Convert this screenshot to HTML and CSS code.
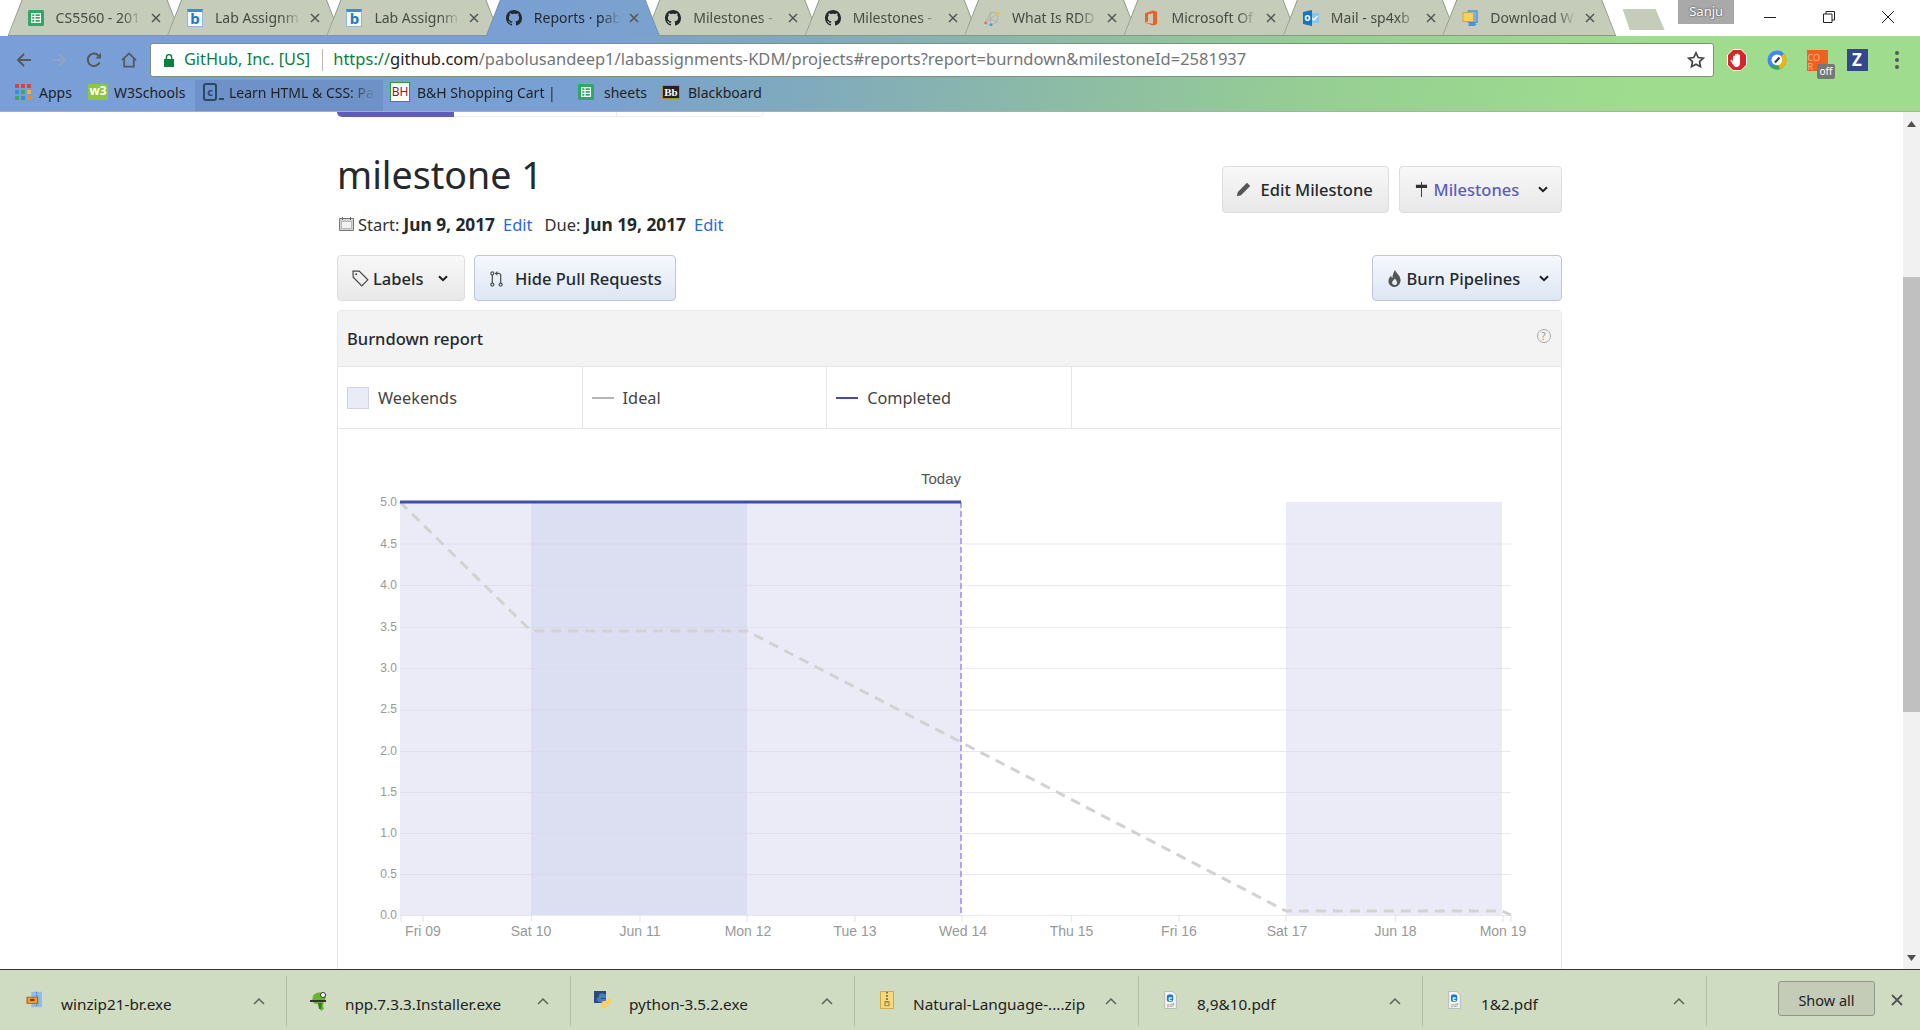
FILE: index.html
```html
<!DOCTYPE html>
<html lang="en">
  <head>
    <meta charset="UTF-8" />
    <meta name="viewport" content="width=device-width, initial-scale=1.0" />
    <title>Reports</title>
    <link rel="stylesheet" href="styles.css">
  </head>
  <body>
    <svg class="defs" width="0" height="0">
      <symbol id="i-github" viewBox="0 0 16 16"><path fill="#24292e" d="M8 0C3.58 0 0 3.58 0 8c0 3.54 2.29 6.53 5.47 7.59.4.07.55-.17.55-.38 0-.19-.01-.82-.01-1.49-2.01.37-2.53-.49-2.69-.94-.09-.23-.48-.94-.82-1.13-.28-.15-.68-.52-.01-.53.63-.01 1.08.58 1.23.82.72 1.21 1.87.87 2.33.66.07-.52.28-.87.51-1.07-1.78-.2-3.64-.89-3.64-3.95 0-.87.31-1.59.82-2.15-.08-.2-.36-1.02.08-2.12 0 0 .67-.21 2.2.82.64-.18 1.32-.27 2-.27.68 0 1.36.09 2 .27 1.53-1.04 2.2-.82 2.2-.82.44 1.1.16 1.92.08 2.12.51.56.82 1.27.82 2.15 0 3.07-1.87 3.75-3.65 3.95.29.25.54.73.54 1.48 0 1.07-.01 1.93-.01 2.2 0 .21.15.46.55.38A8.013 8.013 0 0016 8c0-4.42-3.58-8-8-8z"/></symbol>
      <symbol id="i-sheets" viewBox="0 0 16 16"><rect width="16" height="16" rx="1.5" fill="#2fa866"/><path fill="none" stroke="#fff" stroke-width="1.2" d="M3.6 3.6h8.8v8.8H3.6zM3.6 6.5h8.8M3.6 9.4h8.8M7 3.6v8.8"/></symbol>
      <symbol id="i-close" viewBox="0 0 10 10"><path fill="none" stroke="#555" stroke-width="1.5" d="M1 1l8 8M9 1l-8 8"/></symbol>
      <symbol id="i-caret" viewBox="0 0 12 8"><path fill="none" stroke="#5c6358" stroke-width="1.5" d="M1 7l5-5 5 5"/></symbol>
      <symbol id="i-chev" viewBox="0 0 10 7"><path fill="none" stroke="#1b1f23" stroke-width="2" d="M1 1.2l4 4 4-4"/></symbol>
    </svg>

    <div class="tabstrip">
      <div class="tab">
        <svg class="favicon"><use href="#i-sheets"/></svg>
        <span class="tab-title">CS5560 - 201</span>
        <svg class="tab-close"><use href="#i-close"/></svg>
      </div>
      <div class="tab">
        <span class="favicon fav-b">b</span>
        <span class="tab-title">Lab Assignm</span>
        <svg class="tab-close"><use href="#i-close"/></svg>
      </div>
      <div class="tab">
        <span class="favicon fav-b">b</span>
        <span class="tab-title">Lab Assignm</span>
        <svg class="tab-close"><use href="#i-close"/></svg>
      </div>
      <div class="tab tab-active">
        <svg class="favicon"><use href="#i-github"/></svg>
        <span class="tab-title">Reports · pab</span>
        <svg class="tab-close"><use href="#i-close"/></svg>
      </div>
      <div class="tab">
        <svg class="favicon"><use href="#i-github"/></svg>
        <span class="tab-title">Milestones -</span>
        <svg class="tab-close"><use href="#i-close"/></svg>
      </div>
      <div class="tab">
        <svg class="favicon"><use href="#i-github"/></svg>
        <span class="tab-title">Milestones -</span>
        <svg class="tab-close"><use href="#i-close"/></svg>
      </div>
      <div class="tab">
        <svg class="favicon" viewBox="0 0 16 16">
          <path fill="none" stroke="#a8a8a8" stroke-width=".7" d="M1 13L7 2l7 1-1 9-6 3zM7 2l-1 7 7 3M1 13l5-4 8-6M6 9l1 6"/>
          <circle cx="14" cy="3" r="1.6" fill="#f2c037"/><circle cx="7" cy="15" r="1.4" fill="#3fa0e8"/><circle cx="1.5" cy="13" r="1.2" fill="#e0664a"/>
        </svg>
        <span class="tab-title">What Is RDD</span>
        <svg class="tab-close"><use href="#i-close"/></svg>
      </div>
      <div class="tab">
        <svg class="favicon" viewBox="0 0 16 16"><path fill="#e8622a" d="M2 3.2L10 .5l4 1.2v12.6L10 15.5l-8-2.7 8 1V3.3L5 4.4v7.2l-3 1.2z"/></svg>
        <span class="tab-title">Microsoft Of</span>
        <svg class="tab-close"><use href="#i-close"/></svg>
      </div>
      <div class="tab">
        <svg class="favicon" viewBox="0 0 16 16">
          <rect x="7" y="3" width="9" height="10" fill="#8cc4ee"/><path fill="none" stroke="#fff" stroke-width="1.3" d="M9 8l2 2 3.5-4"/>
          <path fill="#1474c8" d="M0 2l9-2v16l-9-2z"/><text x="4.4" y="11" class="fav-o">o</text>
        </svg>
        <span class="tab-title">Mail - sp4xb</span>
        <svg class="tab-close"><use href="#i-close"/></svg>
      </div>
      <div class="tab">
        <svg class="favicon" viewBox="0 0 18 18">
          <rect x="7" y="1" width="10" height="13" fill="#7eb4e6" stroke="#3c82c8"/><rect x="1" y="3" width="12" height="10" fill="#f3d35e" stroke="#c9a634"/><path fill="#4a94d8" d="M8 14h7v2l2 0-3 2H7z"/>
        </svg>
        <span class="tab-title">Download W</span>
        <svg class="tab-close"><use href="#i-close"/></svg>
      </div>
      <div class="newtab"></div>
      <div class="profile">Sanju</div>
      <div class="winbtns">
        <svg width="12" height="12" viewBox="0 0 12 12"><path stroke="#222" d="M0 6.5h12"/></svg>
        <svg width="12" height="12" viewBox="0 0 12 12"><path fill="none" stroke="#222" d="M.5 3h8.5v8.5H.5zM3 3V.5h8.5V9H9"/></svg>
        <svg width="12" height="12" viewBox="0 0 12 12"><path stroke="#222" d="M0 0l12 12M12 0L0 12"/></svg>
      </div>
    </div>

    <div class="framebar">
      <div class="toolbar">
        <div class="navbtn">
          <svg width="16" height="16" viewBox="0 0 16 16"><path fill="none" stroke="#55585c" stroke-width="2" d="M15 8H2M8 2L2 8l6 6"/></svg>
        </div>
        <div class="navbtn">
          <svg width="16" height="16" viewBox="0 0 16 16"><path fill="none" stroke="#8fa4c4" stroke-width="2" d="M1 8h13M8 2l6 6-6 6"/></svg>
        </div>
        <div class="navbtn">
          <svg width="16" height="16" viewBox="0 0 16 16"><path fill="none" stroke="#55585c" stroke-width="2" d="M13.6 10.5A6.2 6.2 0 1 1 12.6 3.6L14 5"/><path fill="#55585c" d="M15 .8V6.4H9.4z"/></svg>
        </div>
        <div class="navbtn">
          <svg width="16" height="16" viewBox="0 0 16 16"><path fill="none" stroke="#55585c" stroke-width="1.8" d="M1 8.2L8 1.4l7 6.8M3.2 7v7.6h9.6V7"/></svg>
        </div>
        <div class="omnibox">
          <svg class="lock" width="10" height="13" viewBox="0 0 10 13"><path fill="#0b8043" d="M0 5h10v8H0z"/><path fill="none" stroke="#0b8043" stroke-width="1.5" d="M2.4 5V3.2a2.6 2.6 0 0 1 5.2 0V5"/></svg>
          <span class="ev-name">GitHub, Inc. [US]</span>
          <span class="ev-sep"></span>
          <span class="url"><span class="url-scheme">https://</span><span class="url-host">github.com</span>/pabolusandeep1/labassignments-KDM/projects#reports?report=burndown&amp;milestoneId=2581937</span>
          <svg class="star" width="18" height="18" viewBox="0 0 18 18"><path fill="none" stroke="#444" stroke-width="1.7" d="M9 1.8l2.2 4.7 5.1.6-3.8 3.5 1 5.1L9 13.2l-4.5 2.5 1-5.1-3.8-3.5 5.1-.6z"/></svg>
        </div>
        <div class="ext">
          <svg width="20" height="24" viewBox="0 0 20 24"><path fill="#d8252b" stroke="#fff" d="M6 1.5h8L19.5 7v10L14 22.500H6L.5 17V7z"/><path fill="#fff" d="M6 14V8.200a1 1 0 0 1 1.800 0V6.500a1 1 0 0 1 1.800 0v-.4a1 1 0 0 1 1.800 0v1a1 1 0 0 1 1.600 0V15c0 2.500-1.500 4-3.400 4-2 0-3-1-4-3l-2-3c-.6-1 .9-1.800 1.500-1z"/></svg>
        </div>
        <div class="ext">
          <svg width="20" height="24" viewBox="0 0 20 24"><circle cx="10" cy="12" r="7.500" fill="#fff" stroke="#4285f4" stroke-width="4"/><path fill="none" stroke="#f4b400" stroke-width="4" d="M15.500 6.900A7.500 7.500 0 0 1 12 19.200"/><path fill="none" stroke="#34a853" stroke-width="4" d="M12 19.200A7.500 7.500 0 0 1 5 17.600"/><path stroke="#333" stroke-width="2" d="M8 14.500l4.500-5"/></svg>
        </div>
        <div class="ext ext-cors">
          <span class="cors-box">CO<br>R</span>
          <span class="cors-off">off</span>
        </div>
        <div class="ext"><span class="ext-z">Z</span></div>
        <div class="ext ext-menu"><i></i><i></i><i></i></div>
      </div>
      <div class="bookmarks">
        <div class="bm bm-apps">
          <svg width="16" height="16" viewBox="0 0 16 16">
            <path fill="#d9453c" d="M0 0h4v4H0zM6 0h4v4H6z"/><path fill="#d9453c" d="M12 0h4v4h-4z"/>
            <path fill="#2f8fdc" d="M0 6h4v4H0z"/><path fill="#3bab5a" d="M6 6h4v4H6z"/><path fill="#f0b429" d="M12 6h4v4h-4z"/>
            <path fill="#3bab5a" d="M0 12h4v4H0z"/><path fill="#2f8fdc" d="M6 12h4v4H6z"/><path fill="#f08a29" d="M12 12h4v4h-4z"/>
          </svg>
          Apps
        </div>
        <div class="bm bm-w3"><span class="ic-w3">w3</span>W3Schools</div>
        <div class="bm bm-learn"><span class="ic-c">c</span><span class="ic-under"></span><span class="bm-fade">Learn HTML &amp; CSS: Pa</span></div>
        <div class="bm bm-bh"><span class="ic-bh">BH</span><span class="bm-fade2">B&amp;H Shopping Cart |</span></div>
        <div class="bm bm-sheets"><svg width="16" height="16"><use href="#i-sheets"/></svg>sheets</div>
        <div class="bm bm-bb"><span class="ic-bb">Bb</span>Blackboard</div>
      </div>
    </div>

    <div class="viewport">
      <div class="page">
        <div class="subnav">
          <span class="subnav-on"></span>
          <span class="subnav-a"></span>
          <span class="subnav-b"></span>
        </div>

        <div class="title-row">
          <div>
            <h1>milestone 1</h1>
            <div class="dates">
              <svg width="15" height="14" viewBox="0 0 15 14"><path fill="#d4d4d4" stroke="#777" d="M.5 1.500h14v12H.5z"/><path fill="#f2f2f2" stroke="#999" stroke-width=".6" d="M2.500 4.500h10v7h-10z"/><path stroke="#666" d="M3.500 0v3M11.500 0v3"/></svg>
              <span class="start">Start:</span><b>Jun 9, 2017</b>
              <a class="edit">Edit</a>
              <span class="due">Due:</span><b>Jun 19, 2017</b>
              <a class="edit">Edit</a>
            </div>
          </div>
          <div class="title-btns">
            <button class="btn btn-edit">
              <svg width="15" height="15" viewBox="0 0 15 15"><path fill="#555" d="M11 .8l3.200 3.200L5 13.200 .8 14.200 1.800 10z"/></svg>
              Edit Milestone
            </button>
            <button class="btn btn-miles">
              <svg width="13" height="15" viewBox="0 0 14 16"><path fill="#333" d="M6.500 0h1v3H13v3.500H1V3h5.500zM6.500 6.500h1V16h-1z"/></svg>
              <span class="purple">Milestones</span>
              <svg class="chev"><use href="#i-chev"/></svg>
            </button>
          </div>
        </div>

        <div class="action-row">
          <div class="action-left">
            <button class="btn btn-labels">
              <svg width="17" height="17" viewBox="0 0 17 17"><path fill="none" stroke="#444" stroke-width="1.200" d="M1 1.200h6.200l8.600 8.600-6 6L1.200 7.200z"/><circle cx="4.200" cy="4.200" r="1" fill="#444"/></svg>
              Labels
              <svg class="chev"><use href="#i-chev"/></svg>
            </button>
            <button class="btn btn-blue btn-pr">
              <svg width="13" height="16" viewBox="0 0 14 17"><g fill="none" stroke="#555" stroke-width="1.400"><circle cx="2.500" cy="2.500" r="1.600"/><circle cx="2.500" cy="14.500" r="1.600"/><circle cx="11.500" cy="14.500" r="1.600"/><path d="M2.500 4.100v8.800M11.500 12.900V4.500c0-1.500-1-2-2.500-2H7"/></g><path fill="#555" d="M8 0v5L5 2.500z"/></svg>
              Hide Pull Requests
            </button>
          </div>
          <button class="btn btn-blue btn-burn">
            <svg width="13" height="17" viewBox="0 0 13 17"><path fill="#555" d="M7 0c1 3 5 5 5.500 9.500C13 14 9.500 17 6.500 17S0 14.500.5 10.500C.7 8.500 2 7 3 5.500c.3 1.500.7 2 1.500 2.500C4.500 5 5.500 2.500 7 0zM6.500 15c1.500 0 2.600-1 2.600-2.600 0-1.500-1.400-2.400-2.200-4-1 1.400-2.800 2.500-2.800 4.200C4.100 14 5.200 15 6.500 15z"/></svg>
            Burn Pipelines
            <svg class="chev"><use href="#i-chev"/></svg>
          </button>
        </div>

        <div class="panel">
          <div class="panel-head">
            <span class="panel-title">Burndown report</span>
            <span class="help">?</span>
          </div>
          <div class="legend">
            <div class="legend-cell"><span class="swatch"></span>Weekends</div>
            <div class="legend-cell"><span class="dash dash-ideal"></span>Ideal</div>
            <div class="legend-cell"><span class="dash dash-done"></span>Completed</div>
          </div>
          <svg class="chart" width="1222" height="540" viewBox="338 429 1222 540">
            <rect x="400" y="502" width="561" height="413" fill="#eaebf7"/>
            <rect x="531" y="502" width="216" height="413" fill="#dcdff1"/>
            <rect x="1286" y="502" width="216" height="413" fill="#eaebf7"/>

            <g class="grid">
              <path d="M400 544H1511M400 585.500H1511M400 627.500H1511M400 668.500H1511M400 710H1511M400 751.500H1511M400 792.500H1511M400 833.500H1511M400 874.500H1511M400 915.500H1511"/>
              <path d="M401 915v7M423 915v7M531.500 915v7M640 915v7M747 915v7M855 915v7M962 915v7M1071.500 915v7M1179 915v7M1286 915v7M1395.500 915v7M1503 915v7M1511 915v7"/>
            </g>

            <path class="ideal" d="M400 502L531 631H747L1286 911H1502L1511 915"/>
            <path class="today" d="M961 502V915"/>
            <path class="done" d="M400 502H961"/>

            <text x="961" y="483.500" class="today-label">Today</text>

            <g class="ylabels">
              <text x="397" y="506">5.0</text>
              <text x="397" y="548">4.5</text>
              <text x="397" y="589">4.0</text>
              <text x="397" y="631">3.5</text>
              <text x="397" y="672">3.0</text>
              <text x="397" y="713">2.5</text>
              <text x="397" y="755">2.0</text>
              <text x="397" y="796">1.5</text>
              <text x="397" y="837">1.0</text>
              <text x="397" y="878">0.5</text>
              <text x="397" y="919">0.0</text>
            </g>
            <g class="xlabels">
              <text x="423" y="936">Fri 09</text>
              <text x="531" y="936">Sat 10</text>
              <text x="640" y="936">Jun 11</text>
              <text x="748" y="936">Mon 12</text>
              <text x="855" y="936">Tue 13</text>
              <text x="963" y="936">Wed 14</text>
              <text x="1071.500" y="936">Thu 15</text>
              <text x="1179" y="936">Fri 16</text>
              <text x="1287" y="936">Sat 17</text>
              <text x="1395.500" y="936">Jun 18</text>
              <text x="1503" y="936">Mon 19</text>
            </g>
          </svg>
        </div>
      </div>

      <div class="scrollbar">
        <svg class="arrow" width="9" height="6" viewBox="0 0 9 6"><path fill="#505050" d="M4.500 0L9 6H0z"/></svg>
        <div class="thumb"></div>
        <svg class="arrow" width="9" height="6" viewBox="0 0 9 6"><path fill="#505050" d="M0 0h9L4.500 6z"/></svg>
      </div>
    </div>

    <div class="downloads">
      <div class="dl">
        <svg class="dl-icon" width="17" height="17" viewBox="0 0 16 22" preserveAspectRatio="none"><path fill="#8fbce8" d="M5 1h10v20H5z"/><path stroke="#3a78c0" stroke-dasharray="2 2" d="M10 1v20"/><path fill="#e8a030" stroke="#a05a18" d="M1 8h10v8H1z"/><path fill="#a02c20" d="M4 10h4v3H4z"/></svg>
        <span class="dl-name">winzip21-br.exe</span>
        <svg class="dl-caret"><use href="#i-caret"/></svg>
      </div>
      <div class="dl">
        <svg class="dl-icon" width="20" height="20" viewBox="0 0 20 20"><path fill="#6bb52d" d="M3 5c1-3 8-5 12-2 2 2 1 5-1 7l-1 5 1 3-3 2-2-4-1-3H5L2 10z"/><circle cx="13" cy="4" r="2.500" fill="#fff" stroke="#333"/><path stroke="#333" stroke-width="2" d="M0 10h16"/><path fill="#2f7d22" d="M8 12h4l-1 6H9z"/></svg>
        <span class="dl-name">npp.7.3.3.Installer.exe</span>
        <svg class="dl-caret"><use href="#i-caret"/></svg>
      </div>
      <div class="dl">
        <svg class="dl-icon" width="18" height="18" viewBox="0 0 18 18"><path fill="#2c4a7c" d="M0 0h12v12H0z"/><path fill="#4a7cc0" d="M5 4c0-2 6-2 7 0v3H7v1h5v3H6c-2 0-3-1-3-3 0-2 2-2 2-2z"/><path fill="#ffd342" d="M14 7c2 0 3 1 3 3 0 3-2 3-3 3H9v1h5v1c0 3-6 3-7 1v-3c0-2 2-3 3-3h4z"/></svg>
        <span class="dl-name">python-3.5.2.exe</span>
        <svg class="dl-caret"><use href="#i-caret"/></svg>
      </div>
      <div class="dl">
        <svg class="dl-icon dl-icon-doc" width="14" height="18" viewBox="0 0 14 22" preserveAspectRatio="none"><path fill="#f6d97a" stroke="#c9a634" d="M.5.500h13v21H.5z"/><path stroke="#8a7440" stroke-width="2" stroke-dasharray="2 2" d="M7 1v13"/><rect x="5" y="13" width="4" height="5" fill="none" stroke="#8a7440"/></svg>
        <span class="dl-name">Natural-Language-....zip</span>
        <svg class="dl-caret"><use href="#i-caret"/></svg>
      </div>
      <div class="dl">
        <svg class="dl-icon dl-icon-doc" width="13" height="18" viewBox="0 0 14 20"><path fill="#f4f4f4" stroke="#b5b5b5" d="M.5.5h9l4 4v15H.5z"/><rect x="3" y="4" width="7" height="8" rx="2" fill="#1976d2"/><text x="6.500" y="10.600" class="pdf-e">e</text><text x="7" y="17.500" class="pdf-t">pdf</text></svg>
        <span class="dl-name">8,9&amp;10.pdf</span>
        <svg class="dl-caret"><use href="#i-caret"/></svg>
      </div>
      <div class="dl">
        <svg class="dl-icon dl-icon-doc" width="13" height="18" viewBox="0 0 14 20"><path fill="#f4f4f4" stroke="#b5b5b5" d="M.5.5h9l4 4v15H.5z"/><rect x="3" y="4" width="7" height="8" rx="2" fill="#1976d2"/><text x="6.500" y="10.600" class="pdf-e">e</text><text x="7" y="17.500" class="pdf-t">pdf</text></svg>
        <span class="dl-name">1&amp;2.pdf</span>
        <svg class="dl-caret"><use href="#i-caret"/></svg>
      </div>
      <button class="showall">Show all</button>
      <svg class="dl-close" width="12" height="12" viewBox="0 0 12 12"><path fill="none" stroke="#555" stroke-width="1.800" d="M1 1l10 10M11 1L1 11"/></svg>
    </div>
  </body>
</html>
```

FILE: styles.css
```css
* {
  box-sizing: border-box;
}
html,
body {
  margin: 0;
  height: 100%;
}
body {
  display: flex;
  flex-direction: column;
  height: 1030px;
  overflow: hidden;
  background-color: #ffffff;
  color: #24292e;
  font-family: 'Noto Sans', 'Open Sans', sans-serif;
}
.defs {
  position: absolute;
}

/* tab strip */
.tabstrip {
  display: flex;
  flex: none;
  height: 36px;
  padding-left: 7.6px;
  background-color: #ffffff;
}
.tab {
  position: relative;
  display: flex;
  flex: none;
  align-items: center;
  width: 174px;
  height: 36px;
  margin-right: -14.6px;
  padding: 0 0 1px 20px;
  background-color: #8d9585;
  clip-path: polygon(14px 0, 160px 0, 174px 100%, 0 100%);
  font-size: 14px;
  color: #484c44;
}
.tab::before {
  content: '';
  position: absolute;
  top: 0;
  left: 1px;
  width: 172px;
  height: 35px;
  background-color: #c5ccb9;
  clip-path: polygon(14px 0, 158px 0, 172px 100%, 0 100%);
}
.tab > * {
  position: relative;
}
.tab-active {
  color: #24292e;
  background-color: #6f8fb8;
  z-index: 1;
}
.tab-active::before {
  height: 36px;
  background: linear-gradient(90deg, #7a9fd3, #7aa2ce);
}
.favicon {
  flex: none;
  width: 16px;
  height: 16px;
  margin-right: 12px;
}
.fav-b {
  display: block;
  height: 18px;
  border: 1px solid #8db9df;
  border-top-width: 3px;
  border-top-color: #3f8ccb;
  background-color: #f4f8fc;
  color: #1f7ac4;
  font-size: 15px;
  font-weight: 700;
  line-height: 13px;
  text-align: center;
}
.fav-o {
  fill: #ffffff;
  font-size: 10px;
  font-weight: 700;
  text-anchor: middle;
}
.tab-title {
  flex: none;
  width: 86px;
  overflow: hidden;
  white-space: nowrap;
  -webkit-mask-image: linear-gradient(90deg, #000 78%, transparent 100%);
  mask-image: linear-gradient(90deg, #000 78%, transparent 100%);
}
.tab-close {
  flex: none;
  width: 10px;
  height: 10px;
  margin-left: 9px;
}
.newtab {
  flex: none;
  width: 42px;
  height: 21px;
  margin: 9px 0 0 21px;
  background-color: #c5ccb9;
  clip-path: polygon(0 0, 33px 0, 100% 100%, 7px 100%);
}
.profile {
  flex: none;
  width: 56px;
  height: 24px;
  margin-left: 13.500px;
  background-color: #a9a9a9;
  color: #ffffff;
  font-size: 13px;
  line-height: 23px;
  text-align: center;
  text-shadow: 0 0 2px #222222;
}
.winbtns {
  display: flex;
  flex: none;
  gap: 47px;
  height: 12px;
  margin: 11px 0 0 30px;
}

/* toolbar + bookmarks share the theme gradient */
.framebar {
  flex: none;
  height: 76px;
  border-bottom: 1px solid #a8b0a8;
  background: linear-gradient(95deg, #7a9fd8 0%, #79a0d2 30%, #80aabd 42%, #8cbba6 55%, #97d092 70%, #9fdc8e 85%);
}
.toolbar {
  display: flex;
  align-items: flex-start;
  height: 39px;
  padding: 7px 0 0 6px;
}
.navbtn {
  display: flex;
  flex: none;
  align-items: center;
  justify-content: center;
  width: 35px;
  height: 34px;
}
.omnibox {
  display: flex;
  flex: none;
  align-items: center;
  width: 1564px;
  height: 34px;
  margin-left: 4px;
  padding: 0 8px 3px 13px;
  border: 1px solid #7f8f7f;
  border-radius: 3px;
  background-color: #ffffff;
  font-size: 16.500px;
  color: #757575;
  white-space: nowrap;
}
.lock {
  flex: none;
  margin: 3px 10px 0 0;
}
.ev-name {
  color: #0b8043;
  font-size: 16.300px;
}
.ev-sep {
  flex: none;
  width: 1px;
  height: 22px;
  margin: 3px 10px 0 12px;
  background-color: #b9b9b9;
}
.url {
  flex: 1;
}
.url-scheme {
  color: #0b8043;
}
.url-host {
  color: #222222;
}
.star {
  margin-top: 3px;
}
.ext {
  display: flex;
  flex: none;
  align-items: center;
  justify-content: center;
  width: 40px;
  height: 34px;
}
.omnibox + .ext {
  margin-left: 3px;
}
.ext-cors {
  position: relative;
}
.cors-box {
  display: block;
  width: 21px;
  height: 21px;
  padding-left: 1px;
  background-color: #f2601c;
  color: #f7b48e;
  font-size: 9px;
  line-height: 9px;
  padding-top: 3px;
}
.cors-off {
  position: absolute;
  top: 21px;
  left: 20px;
  width: 18px;
  height: 15px;
  border-radius: 2px;
  background-color: #777777;
  color: #ffffff;
  font-size: 10px;
  line-height: 14px;
  text-align: center;
}
.ext-z {
  display: block;
  width: 21px;
  height: 22px;
  background-color: #33478f;
  color: #ffffff;
  font-size: 17px;
  font-weight: 700;
  line-height: 22px;
  text-align: center;
}
.ext-menu {
  flex-direction: column;
  gap: 3px;
}
.ext-menu i {
  display: block;
  width: 4px;
  height: 4px;
  border-radius: 50%;
  background-color: #55585c;
}

.bookmarks {
  display: flex;
  align-items: flex-end;
  height: 36px;
  padding-left: 15px;
  font-size: 14px;
  color: #1d2126;
  white-space: nowrap;
}
.bm {
  display: flex;
  flex: none;
  align-items: center;
  height: 31px;
  padding-bottom: 7px;
}
.bm-apps {
  gap: 8px;
  width: 73px;
}
.bm-w3 {
  gap: 6px;
  width: 107px;
}
.ic-w3 {
  display: block;
  width: 20px;
  height: 16px;
  border-radius: 2px;
  background-color: #8fc63f;
  color: #ffffff;
  font-size: 12px;
  font-weight: 700;
  line-height: 14px;
  text-align: center;
}
.bm-learn {
  width: 188px;
  padding-left: 8px;
  background-color: rgba(70, 90, 150, 0.2);
}
.ic-c {
  display: block;
  width: 14px;
  height: 18px;
  border: 2px solid #2a4668;
  border-radius: 3px;
  color: #2a4668;
  font-size: 11px;
  font-weight: 700;
  line-height: 13px;
  text-align: center;
}
.ic-under {
  display: block;
  width: 5px;
  height: 2px;
  margin: 14px 5px 0 2px;
  background-color: #2a4668;
}
.bm-fade {
  width: 146px;
  overflow: hidden;
  -webkit-mask-image: linear-gradient(90deg, #000 82%, transparent 100%);
  mask-image: linear-gradient(90deg, #000 82%, transparent 100%);
}
.bm-bh {
  gap: 7px;
  width: 195px;
  padding-left: 7px;
}
.ic-bh {
  display: block;
  width: 20px;
  height: 20px;
  border: 1px solid #2d9a3c;
  background-color: #ffffff;
  color: #8c1c1c;
  font-size: 12px;
  line-height: 18px;
  text-align: center;
}
.bm-fade2 {
  width: 146px;
  overflow: hidden;
  -webkit-mask-image: linear-gradient(90deg, #000 92%, transparent 100%);
  mask-image: linear-gradient(90deg, #000 92%, transparent 100%);
}
.bm-sheets {
  gap: 10px;
  width: 84px;
}
.bm-bb {
  gap: 8px;
}
.ic-bb {
  display: block;
  width: 18px;
  height: 14px;
  border: 1px solid #b08a2e;
  background-color: #222222;
  color: #ffffff;
  font-family: 'Liberation Serif', serif;
  font-size: 11px;
  font-weight: 700;
  line-height: 12px;
  text-align: center;
}

/* page */
.viewport {
  display: flex;
  flex: 1;
  min-height: 0;
  overflow: hidden;
}
.page {
  flex: none;
  width: 1224.500px;
  margin-left: 337px;
}
.scrollbar {
  display: flex;
  flex: none;
  flex-direction: column;
  align-items: center;
  width: 17px;
  margin-left: 341.500px;
  padding-top: 9px;
  background-color: #f1f1f1;
}
.thumb {
  width: 17px;
  height: 435px;
  margin: 150px 0 243px;
  background-color: #c0c0c0;
}
.subnav {
  display: flex;
  height: 5px;
  width: 427px;
  border: 1px solid #ececec;
  border-top: 0;
  border-radius: 0 0 6px 6px;
}
.subnav-on {
  width: 117px;
  margin: 0 0 -1px -1px;
  border-radius: 0 0 0 6px;
  background-color: #5e5cb8;
}
.subnav-a {
  width: 163px;
  border-right: 1px solid #ececec;
}
.title-row {
  display: flex;
  justify-content: space-between;
  margin-top: 38px;
}
h1 {
  margin: 0;
  font-size: 37.600px;
  font-weight: 400;
  line-height: 39px;
}
.dates {
  display: flex;
  align-items: center;
  height: 24px;
  margin-top: 18px;
  padding-left: 2px;
  font-size: 16.500px;
  white-space: nowrap;
}
.dates svg {
  margin-right: 4px;
}
.dates b {
  margin-left: 4px;
  font-size: 17.300px;
  font-weight: 700;
}
.start,
.due {
  color: #333333;
}
.edit {
  margin: 0 12px 0 8px;
  color: #2a6ae0;
}
.title-btns {
  display: flex;
  gap: 10px;
  margin-top: 11px;
}
.btn {
  display: flex;
  align-items: center;
  border: 1px solid #dddddd;
  border-radius: 4px;
  background: linear-gradient(180deg, #f8f8f8, #e8e8e8);
  color: #24292e;
  font-family: inherit;
  font-size: 16.500px;
  font-weight: 500;
  white-space: nowrap;
}
.btn-blue {
  border-color: #bcc6d8;
  background: linear-gradient(180deg, #f5f8fd, #dfe6f3);
}
.chev {
  flex: none;
  width: 10px;
  height: 7px;
}
.btn-edit {
  gap: 10px;
  width: 167px;
  height: 47px;
  padding-left: 13px;
}
.btn-miles {
  gap: 6px;
  width: 163px;
  height: 47px;
  padding-left: 15px;
}
.btn-miles .chev {
  margin-left: 13px;
}
.purple {
  color: #5e5cb8;
}
.action-row {
  display: flex;
  justify-content: space-between;
  margin-top: 19px;
}
.action-row .btn {
  padding-top: 2px;
}
.action-left {
  display: flex;
  gap: 9px;
}
.btn-labels {
  gap: 4px;
  width: 128px;
  height: 46px;
  padding-left: 14px;
}
.btn-labels .chev {
  margin-left: 11px;
}
.btn-pr {
  gap: 12px;
  width: 202px;
  height: 46px;
  padding-left: 15px;
}
.btn-burn {
  gap: 6px;
  width: 190px;
  height: 46px;
  padding-left: 15px;
}
.btn-burn .chev {
  margin-left: 13px;
}

/* report */
.panel {
  margin-top: 9px;
  border: 1px solid #e8e8e8;
  border-radius: 4px 4px 0 0;
}
.panel-head {
  display: flex;
  align-items: center;
  justify-content: space-between;
  height: 56px;
  padding: 0 10px 0 9px;
  border-bottom: 1px solid #e6e6e6;
  background-color: #f3f3f3;
}
.panel-title {
  font-size: 16.500px;
  font-weight: 500;
}
.help {
  width: 14px;
  height: 14px;
  margin-top: -5px;
  border: 1px solid #a8a8a8;
  border-radius: 50%;
  color: #909090;
  font-size: 10px;
  line-height: 12px;
  text-align: center;
}
.legend {
  display: flex;
  height: 62px;
  border-bottom: 1px solid #e6e6e6;
  font-size: 16.300px;
  color: #444444;
}
.legend-cell {
  display: flex;
  align-items: center;
  width: 244.600px;
  padding-left: 9px;
  border-right: 1px solid #e6e6e6;
}
.swatch {
  width: 22px;
  height: 22px;
  margin-right: 9px;
  border: 1px solid #d0d3e6;
  background-color: #e9ebf7;
}
.dash {
  width: 22px;
  height: 2px;
  margin-right: 9px;
}
.dash-ideal {
  background-color: #b5b5b5;
}
.dash-done {
  background-color: #3f4ea8;
}
.chart {
  display: block;
}
.grid path {
  fill: none;
  stroke: #d8d8e2;
  stroke-opacity: 0.6;
  stroke-width: 1.200;
}
.ideal {
  fill: none;
  stroke: #d2d2d2;
  stroke-width: 3;
  stroke-dasharray: 10 7;
}
.today {
  fill: none;
  stroke: #9b8cff;
  stroke-width: 1.500;
  stroke-dasharray: 6 3;
}
.done {
  fill: none;
  stroke: #3f4ea8;
  stroke-width: 3;
}
.chart text {
  font-family: 'Liberation Sans', Arial, sans-serif;
}
.today-label {
  fill: #555555;
  font-size: 15px;
  text-anchor: end;
}
.ylabels text {
  fill: #999999;
  font-size: 12px;
  text-anchor: end;
}
.xlabels text {
  fill: #999999;
  font-size: 14px;
  text-anchor: middle;
}

/* download shelf */
.downloads {
  display: flex;
  flex: none;
  align-items: center;
  height: 61px;
  padding-left: 3px;
  border-top: 1px solid #333333;
  background-color: #d0dcc2;
}
.dl {
  position: relative;
  display: flex;
  flex: none;
  align-items: center;
  width: 284px;
  height: 50px;
  margin-top: 1px;
  padding-left: 58px;
  border-right: 1px solid #b3bea8;
  font-size: 15.300px;
  color: #222222;
  white-space: nowrap;
}
.dl-icon {
  position: absolute;
  top: 15px;
  left: 23px;
}
.dl-icon-doc {
  left: 25px;
}
.dl-name {
  margin-top: 6px;
}
.dl-caret {
  position: absolute;
  top: 21px;
  left: 250px;
  width: 12px;
  height: 8px;
}
.showall {
  flex: none;
  width: 97px;
  height: 35px;
  margin: 0 0 3px 71px;
  border: 1px solid #8f9885;
  border-radius: 3px;
  background-color: #c4ccb8;
  color: #1d2126;
  font-family: inherit;
  font-size: 14.500px;
  padding: 2px 0 0;
}
.dl-close {
  flex: none;
  margin: 0 0 0 16px;
}
.pdf-e {
  fill: #ffffff;
  font-size: 7px;
  font-weight: 700;
  text-anchor: middle;
}
.pdf-t {
  fill: #888888;
  font-size: 5px;
  text-anchor: middle;
}
```
